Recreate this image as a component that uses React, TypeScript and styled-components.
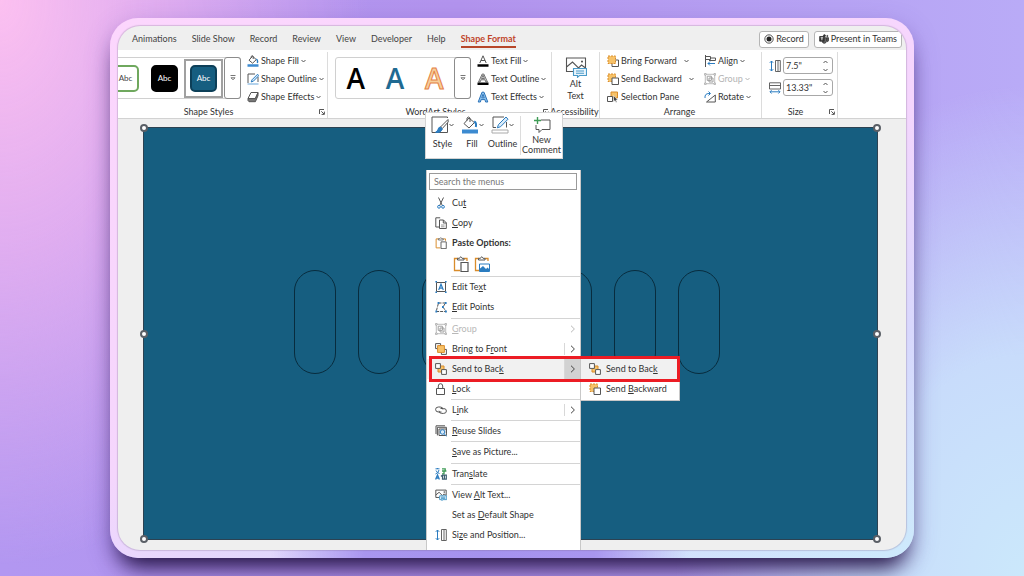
import React from "react";
import styled, { createGlobalStyle, css } from "styled-components";

const GlobalStyle = createGlobalStyle`
  *, *::before, *::after { box-sizing: border-box; }
  body {
    margin: 0;
    font-family: Lato, "Open Sans", "Noto Sans", sans-serif;
    font-size: 9px;
    line-height: 12px;
    color: #333;
  }
  button, input {
    font: inherit;
    color: inherit;
    margin: 0;
    padding: 0;
    border: 0;
    background: none;
  }
  svg { display: block; flex: none; }
`;

/* ---------- page and window ---------- */

const Page = styled.main`
  min-height: 100vh;
  padding: 18px 110px;
  overflow: hidden;
  background:
    radial-gradient(ellipse 36% 98% at 0% 0%, #fcc0f0 0%, rgba(238, 180, 240, 0.75) 45%, rgba(200, 160, 240, 0) 100%),
    radial-gradient(ellipse 34% 85% at 100% 100%, #cbe8fb 0%, #c8dcfb 45%, rgba(190, 175, 246, 0) 100%),
    linear-gradient(90deg, #b297f1 0%, #b394ee 45%, #b9abf7 100%);
`;

const Frame = styled.div`
  padding: 8px;
  border-radius: 28px;
  background:
    radial-gradient(ellipse 26% 60% at 46% 100%, #a592ee 0%, #a996ef 55%, rgba(176, 152, 240, 0) 100%),
    linear-gradient(155deg, #fcd6fd 0%, #f5d6fd 50%, #d8d8fd 75%, #cdeafc 100%);
  box-shadow: 0 18px 22px -10px #20103f, 0 8px 24px rgba(90, 60, 160, 0.35);
`;

const AppWindow = styled.section`
  position: relative;
  overflow: hidden;
  border-radius: 22px;
  background: #efefef;
  box-shadow: 0 0 1px 1px rgba(130, 110, 150, 0.3);
`;

/* ---------- tab bar ---------- */

const TabBar = styled.nav`
  display: flex;
  align-items: center;
  height: 24px;
  padding: 2px 4px 0 14px;
`;

const Tabs = styled.div`
  display: flex;
  flex: 1;
  gap: 15px;
`;

const Tab = styled.button<{ $active?: boolean }>`
  height: 17px;
  line-height: 15px;
  color: #444;
  border-bottom: 2px solid transparent;
  white-space: nowrap;
  ${(p) =>
    p.$active &&
    css`
      color: #c0442a;
      font-weight: 700;
      border-color: #b7472a;
    `}
`;

const BarButton = styled.button`
  display: flex;
  align-items: center;
  gap: 2px;
  height: 17px;
  margin-left: 5px;
  padding: 0 4px;
  background: #fff;
  border: 1px solid #b5b5b5;
  border-radius: 3px;
  white-space: nowrap;
`;

/* ---------- ribbon ---------- */

const Ribbon = styled.div`
  display: flex;
  height: 69px;
  padding-top: 2px;
  background: #fff;
  border-bottom: 1px solid #d2d2d2;
`;

const Group = styled.section<{ $width: number }>`
  display: flex;
  flex-direction: column;
  flex: 0 0 ${(p) => p.$width}px;
  min-width: 0;
  border-right: 1px solid #dcdcdc;
`;

const GroupBody = styled.div<{ $indent?: number }>`
  display: flex;
  flex: none;
  height: 54px;
  gap: 6px;
  padding-left: ${(p) => p.$indent ?? 0}px;
`;

const GroupFooter = styled.div<{ $gap?: number }>`
  display: flex;
  flex: none;
  align-items: center;
  justify-content: flex-end;
  gap: ${(p) => p.$gap ?? 0}px;
  height: 12px;
  padding-right: 2px;
`;

const GroupLabel = styled.span`
  display: flex;
  flex: 1;
  justify-content: center;
  min-width: 0;
  white-space: nowrap;
`;

const Gallery = styled.div<{ $width: number; $open?: boolean }>`
  display: flex;
  align-items: center;
  width: ${(p) => p.$width}px;
  height: 42px;
  margin-top: 5px;
  border: 1px solid #d0d0d0;
  border-radius: 3px;
  ${(p) =>
    p.$open &&
    css`
      border-left: 0;
      border-top-left-radius: 0;
      border-bottom-left-radius: 0;
    `}
`;

const StyleSlot = styled.button<{ $selected?: boolean }>`
  display: flex;
  align-items: center;
  justify-content: center;
  width: 39px;
  height: 39px;
  border: 2px solid ${(p) => (p.$selected ? "#a0a0a0" : "transparent")};

  &:first-child {
    margin-left: -12px;
  }
`;

const StyleTile = styled.span<{ $fill: string; $ink: string; $edge: string }>`
  flex: none;
  width: 27px;
  height: 27px;
  font-size: 8px;
  line-height: 22px;
  text-align: center;
  color: ${(p) => p.$ink};
  background: ${(p) => p.$fill};
  border: 2px solid ${(p) => p.$edge};
  border-radius: 5px;
`;

const ArtButton = styled.button`
  display: flex;
  flex: 1;
  align-items: center;
  justify-content: center;
`;

const GalleryMore = styled.button`
  display: flex;
  align-items: center;
  justify-content: center;
  width: 17px;
  height: 42px;
  margin: 0 -1px 0 auto;
  border: 1px solid #8c8c8c;
  border-radius: 3px;
`;

const Commands = styled.div<{ $width?: number }>`
  display: flex;
  flex-direction: column;
  width: ${(p) => (p.$width ? `${p.$width}px` : "auto")};
`;

const Command = styled.button<{ $disabled?: boolean; $spread?: boolean }>`
  display: flex;
  align-items: center;
  gap: ${(p) => (p.$spread ? 7 : 2)}px;
  height: 18px;
  white-space: nowrap;
  color: ${(p) => (p.$disabled ? "#b4b4b4" : "inherit")};
`;

const CommandText = styled.span`
  display: flex;
  align-items: center;
  gap: 2px;
`;

const TallCommand = styled.button`
  display: flex;
  flex-direction: column;
  align-items: center;
  flex: 1;
  padding-top: 4px;
`;

const SizeRow = styled.label`
  display: flex;
  align-items: center;
  gap: 2px;
  height: 17px;
`;

const SizeFields = styled.div`
  display: flex;
  flex-direction: column;
  gap: 5px;
  padding-top: 5px;
`;

const SizeBox = styled.span`
  display: flex;
  align-items: center;
  width: 50px;
  height: 17px;
  padding: 0 4px 0 2px;
  border: 1px solid #a8a8a8;
  border-radius: 3px;
`;

const SizeInput = styled.input`
  flex: 1;
  min-width: 0;
  outline: 0;
`;

const Spinner = styled.span`
  display: flex;
  flex-direction: column;
  gap: 4px;
`;

/* ---------- slide ---------- */

const Stage = styled.div`
  padding: 8px 28px 10px 25px;
`;

const Slide = styled.div`
  position: relative;
  display: flex;
  align-items: center;
  justify-content: center;
  gap: 22px;
  aspect-ratio: 16 / 9;
  padding: 0 7px 24px 0;
  background: #165e80;
  border: 1px solid #2c4252;
`;

const Capsule = styled.span`
  width: 42px;
  height: 104px;
  border: 1px solid #082c3e;
  border-radius: 21px;
`;

const Handle = styled.span<{ $x: number; $y: number }>`
  position: absolute;
  left: ${(p) => p.$x}%;
  top: ${(p) => p.$y}%;
  width: 8px;
  height: 8px;
  transform: translate(-50%, -50%);
  border: 2px solid #5a5f66;
  border-radius: 50%;
  background: #fff;
`;

/* ---------- floating toolbar and menus ---------- */

const MiniToolbar = styled.div`
  position: absolute;
  left: 307px;
  top: 86px;
  display: flex;
  width: 138px;
  height: 47px;
  padding: 3px 0;
  background: #fff;
  border: 1px solid #d4d4d4;
`;

const MiniButton = styled.button<{ $width: number; $divided?: boolean }>`
  display: flex;
  flex-direction: column;
  align-items: center;
  justify-content: space-between;
  flex: 0 0 ${(p) => p.$width}px;
  padding-bottom: ${(p) => (p.$divided ? 0 : 6)}px;
  line-height: 10px;
  border-left: ${(p) => (p.$divided ? "1px solid #dcdcdc" : "0")};
`;

const MiniIcon = styled.span`
  display: flex;
  align-items: center;
`;

const ContextMenu = styled.div`
  position: absolute;
  left: 308px;
  top: 144px;
  width: 155px;
  padding: 3px 0 20px;
  background: #fff;
  border: 1px solid #c8c8c8;
  border-top-width: 0;
`;

const SearchBox = styled.input`
  display: block;
  width: 148px;
  height: 17px;
  margin: 0 0 3px 2px;
  padding: 0 4px 1px;
  border: 1px solid #9a9a9a;
  background: #fff;

  &::placeholder {
    color: #777;
    opacity: 1;
  }
`;

const MenuRow = styled.button<{ $disabled?: boolean; $current?: boolean; $bold?: boolean }>`
  display: flex;
  align-items: center;
  width: 100%;
  height: 20px;
  padding-left: 8px;
  text-align: left;
  white-space: nowrap;
  color: ${(p) => (p.$disabled ? "#b8b8b8" : "#333")};
  background: ${(p) => (p.$current ? "#f1f1f1" : "transparent")};
  font-weight: ${(p) => (p.$bold ? 700 : 400)};
`;

const MenuIcon = styled.span`
  width: 17px;
`;

const MenuText = styled.span`
  flex: 1;
`;

const MenuArrow = styled.span<{ $split?: boolean; $current?: boolean }>`
  display: flex;
  align-items: center;
  justify-content: center;
  width: 16px;
  height: ${(p) => (p.$current ? 20 : 12)}px;
  border-left: 1px solid ${(p) => (p.$split ? "#d8d8d8" : "transparent")};
  background: ${(p) => (p.$current ? "#d2d2d2" : "transparent")};
`;

const MenuRule = styled.hr<{ $roomy?: boolean }>`
  height: 1px;
  margin: ${(p) => (p.$roomy ? 1 : 0)}px 0 0 24px;
  border: 0;
  background: #d4d4d4;
`;

const PasteRow = styled.div`
  display: flex;
  align-items: flex-start;
  gap: 5px;
  height: 23px;
  padding: 3px 0 0 26px;
`;

const SubMenu = styled.div`
  position: absolute;
  left: 462px;
  top: 331px;
  width: 100px;
  padding: 1px 0;
  background: #fff;
  border: 1px solid #c8c8c8;
`;

const Highlight = styled.div`
  position: absolute;
  left: 311px;
  top: 330px;
  width: 251px;
  height: 26px;
  border: 3px solid #ec1c24;
  pointer-events: none;
`;

/* ---------- icons ---------- */

const INK = "#555";
const BLUE = "#2b7cc0";
const AMBER = "#f7c268";
const RUST = "#d98c2b";

type IconProps = { children: React.ReactNode; w?: number; h?: number; box?: string };
const Icon = ({ children, w = 12, h = 12, box = "0 0 12 12" }: IconProps) => (
  <svg width={w} height={h} viewBox={box} fill="none" stroke={INK} strokeWidth="1" aria-hidden="true">
    {children}
  </svg>
);

const Down = ({ color = "#555" }: { color?: string }) => (
  <svg width="5" height="4" viewBox="0 0 5 4" fill="none" stroke={color} aria-hidden="true">
    <path d="M0.5 1l2 2 2-2" />
  </svg>
);

const Up = () => (
  <svg width="5" height="4" viewBox="0 0 5 4" fill="none" stroke="#555" aria-hidden="true">
    <path d="M0.5 3l2-2 2 2" />
  </svg>
);

const Right = ({ color = "#444" }: { color?: string }) => (
  <svg width="6" height="8" viewBox="0 0 6 8" fill="none" stroke={color} aria-hidden="true">
    <path d="M1 0.7l3.4 3.3L1 7.3" />
  </svg>
);

const MoreMark = () => (
  <svg width="6" height="6" viewBox="0 0 6 6" fill="none" stroke="#666" aria-hidden="true">
    <path d="M0.5 0.5h5M1 2.8h4L3 4.8z" strokeWidth="0.9" />
  </svg>
);

const Launcher = () => (
  <svg width="6" height="6" viewBox="0 0 6 6" fill="none" stroke="#555" aria-hidden="true">
    <path d="M0.5 5V0.5H5M2.3 2.3L5 5M5.4 2.6v2.8H2.6" />
  </svg>
);

const FillIcon = () => (
  <Icon>
    <path d="M5.5 1.2L2 5.2l3.6 3 3.7-3.6zM4.2 3V1.4q1-1.4 2 0V4" fill="#fff" />
    <path d="M9.3 4q1.9 1.2 1 4" stroke={BLUE} strokeWidth="1.4" />
    <path d="M0.5 10.5h11" stroke="#3c8ad0" strokeWidth="2.4" />
  </Icon>
);
const OutlineIcon = () => (
  <Icon>
    <path d="M8 1H1v9M11 4v5" />
    <path d="M10.6 1.2L5 6.8 4.2 9l2.2-.8 5.2-5.4z" stroke={BLUE} fill="#d9ebf9" />
    <path d="M0.5 11h11" stroke="#9ac3e6" strokeWidth="1.6" />
  </Icon>
);
const EffectsIcon = () => (
  <Icon>
    <path d="M4 1.5h7L8.4 7.5H1z" fill="#fff" />
    <path d="M1 7.5v2l1 1.2h6.4L11 4.7V1.8L8.4 7.5z" fill="#777" />
  </Icon>
);

const TextFillIcon = () => (
  <Icon>
    <path d="M2.8 8L6 0.8 9.2 8M4 5.5h4" />
    <path d="M0.5 10.5h11" stroke="#000" strokeWidth="2.6" />
  </Icon>
);
const TextOutlineIcon = () => (
  <Icon>
    <path d="M1.5 9L5.2 1h1.6L10.5 9H8.9L8 6.8H4L3.1 9zM4.6 5.5h2.8L6 2.2z" strokeWidth="0.8" fill="#ddd" />
    <path d="M0.5 10.7h11" stroke="#000" strokeWidth="2.4" />
  </Icon>
);
const TextEffectsIcon = () => (
  <Icon>
    <path d="M1.2 11L5 1.2h2L10.8 11H8.6L7.9 8.6H4.1L3.4 11zM4.8 6.8h2.4L6 3.4z" stroke="#2a72b8" fill="#8fc3ee" />
  </Icon>
);

const WordArtMark = styled.span<{ $color: string; $outline?: string }>`
  font-family: "Open Sans", sans-serif;
  font-size: 28px;
  line-height: 36px;
  font-weight: 600;
  color: ${(p) => p.$color};
  -webkit-text-stroke: ${(p) => (p.$outline ? `1px ${p.$outline}` : "0")};
`;

const ForwardIcon = () => (
  <Icon>
    <path d="M5 11.5h6.5V5H5z" fill="#fff" />
    <path d="M1 1h7.5v7.5H1z" fill={AMBER} stroke={RUST} strokeDasharray="2 1" />
  </Icon>
);
const BackwardIcon = () => (
  <Icon>
    <path d="M1 1h7.5v7.5H1z" fill={AMBER} stroke={RUST} strokeDasharray="2 1" />
    <path d="M5 11.5h6.5V5H5z" fill="#fff" />
  </Icon>
);
const PaneIcon = () => (
  <Icon>
    <path d="M4 1h6.5v6H4z" fill={AMBER} stroke={RUST} />
    <path d="M0.5 5.5h5v5h-5z" fill="#fff" />
    <path d="M6.5 4.5v6.3l1.5-1.3 1 2 1-.5-1-1.9h1.8z" fill="#444" stroke="#fff" strokeWidth="0.5" />
  </Icon>
);
const AlignIcon = () => (
  <Icon>
    <path d="M1.5 0v12M1.5 1.5h5v3h-5M6.5 3h5v2.5H5" />
    <path d="M11 8.5H4M6 6.5l-2 2 2 2" stroke={BLUE} />
  </Icon>
);
const GroupIcon = ({ color = "#a0a0a0" }: { color?: string }) => (
  <Icon>
    <g stroke={color}>
      <path d="M2 1.3h8M2 10.7h8M1.3 2v8M10.7 2v8" strokeWidth="0.7" />
      <path d="M3.2 3.2h4.2v4.2H3.2zM5 5h4v4H5z" />
      <path d="M0.5 0.5h1.6v1.6H.5zM10 .5h1.6v1.6H10zM.5 10h1.6v1.6H.5zM10 10h1.6v1.6H10z" fill="#fff" strokeWidth="0.7" />
    </g>
  </Icon>
);
const RotateIcon = () => (
  <Icon>
    <path d="M11.3 4v7H2.5z" fill="#fff" />
    <path d="M1 7q-.5-4.5 4-4.5h1M4.5.5l2 2-2 2" stroke={BLUE} />
  </Icon>
);
const HeightIcon = () => (
  <Icon>
    <path d="M6.5 .5h4.8v11H6.5zM9 .5v11" strokeWidth="0.9" />
    <path d="M2.5 1v10M.8 2.8L2.5 1l1.7 1.8M.8 9.2L2.5 11l1.7-1.8" stroke={BLUE} />
  </Icon>
);
const WidthIcon = () => (
  <Icon>
    <path d="M.5 7V.8h11V7zM.5 3.5h11" strokeWidth="0.9" />
    <path d="M1 9.8h10M2.6 8.2L1 9.8l1.6 1.7M9.4 8.2L11 9.8l-1.6 1.7" stroke={BLUE} />
  </Icon>
);
const AltTextIcon = ({ size = 22 }: { size?: number }) => (
  <Icon w={size} h={size} box="0 0 22 22">
    <g strokeWidth={size > 12 ? 1.1 : 1.8}>
      <path d="M9 15.5H1.5V2h19v10M1.5 11l6-5 6 6 3-3 4 3" />
      <path d="M17 4.6v2M16 5.6h2" />
      <path d="M8.5 12.5h13v7h-7l-2 1.8v-1.8h-4z" fill="#eaf5fc" stroke="#4a9ac8" />
      <path d="M11 15h8M11 17.2h8" stroke="#4a9ac8" />
    </g>
  </Icon>
);
const RecordIcon = () => (
  <Icon w={10} h={10}>
    <circle cx="6" cy="6" r="5" stroke="#333" />
    <circle cx="6" cy="6" r="3" fill="#222" stroke="none" />
  </Icon>
);
const TeamsIcon = () => (
  <Icon w={10} h={10}>
    <g stroke="#333" fill="#333">
      <circle cx="6.5" cy="2" r="1.2" />
      <circle cx="10" cy="2.4" r="0.7" />
      <path d="M5 4.5h4v4q-.4 2.6-2.5 2.6T4 9.5zM9.5 4.5h2v3q-.2 1.5-1.5 1.7z" fill="#666" />
      <path d="M.8 3h5.4v5.6H.8z" />
      <path d="M2 4.5h3M3.5 4.5v3" stroke="#fff" />
    </g>
  </Icon>
);

const StyleBigIcon = () => (
  <Icon w={18} h={18} box="0 0 18 18">
    <path d="M16.5 7v9.5H1V1h15.5v1" />
    <path d="M17 3.5L9.5 11l1.8 1.5L17.2 6z" fill="#fff" />
    <path d="M9.4 11q-2 .2-2.4 2.4-.5 2-2.4 2.8 5 1.2 6.8-3.2z" fill={BLUE} stroke={BLUE} />
  </Icon>
);
const FillBigIcon = () => (
  <Icon w={18} h={18} box="0 0 18 18">
    <path d="M8 2L3 7.6l5 4.4 5.4-5.4zM6 4.6V2q1.5-2 3 0v4" fill="#fff" />
    <path d="M13.2 5.5q2.6 1.4 1.6 5.5" stroke={BLUE} strokeWidth="2" />
    <path d="M1 15.5h16" stroke="#3c8ad0" strokeWidth="4" />
  </Icon>
);
const OutlineBigIcon = () => (
  <Icon w={18} h={18} box="0 0 18 18">
    <path d="M13 1H2v10.5h3M15.5 6v5.5" />
    <path d="M15 1L7.5 8.5l-1.2 3.3 3.3-1.1L17 3.2z" fill="#d9ebf9" stroke={BLUE} />
    <path d="M1 14h16v3H1z" stroke="#aaa" fill="#fff" />
  </Icon>
);
const CommentIcon = () => (
  <Icon w={18} h={18} box="0 0 18 18">
    <path d="M8 4h9v9.5H9l-3 3v-3H3V9" fill="#fff" />
    <path d="M4.5 1v7M1 4.5h7" stroke="#3f9c56" strokeWidth="1.4" />
  </Icon>
);

const CutIcon = () => (
  <Icon>
    <path d="M3.5 .5l3.8 8M8.5 .5l-3.8 8" />
    <circle cx="4" cy="9.8" r="1.4" stroke={BLUE} />
    <circle cx="8" cy="9.8" r="1.4" stroke={BLUE} />
  </Icon>
);
const CopyIcon = () => (
  <Icon>
    <path d="M4 10H.8V.8h4.4M4.5 3h4l2.8 2.8v5.7H4.5zM8.3 3v3h3" />
    <path d="M6 8h3.6M6 9.8h3.6" strokeWidth="0.6" />
  </Icon>
);
const PasteIcon = ({ size = 12, picture = false }: { size?: number; picture?: boolean }) => (
  <Icon w={size} h={size} box="0 0 16 16">
    <path d="M5 2.5H1.5v12H7M11 2.5h3V5" stroke={RUST} strokeWidth="1.3" />
    <path d="M4.5 4V2.3h2q1.2-3 2.5 0h2V4z" fill="#fff" />
    {picture ? (
      <>
        <path d="M5.5 8h10v7.5h-10z" fill="#fff" stroke={BLUE} />
        <path d="M6 15v-2.5l3-2.5 3 3 1.5-1.5 2 2V15z" fill={BLUE} stroke="none" />
      </>
    ) : (
      <path d="M8 6.5h7v9H8z" fill="#fff" strokeWidth="1.2" />
    )}
  </Icon>
);
const EditTextIcon = () => (
  <Icon>
    <path d="M1.5 1.5h9v9h-9z" stroke={INK} />
    <path d="M3.7 9L6 3.2 8.3 9M4.5 7.2h3" stroke={BLUE} strokeWidth="1.2" />
    <path d="M.4.8h1.6M10 .8h1.6M.4 11.2H2M10 11.2h1.6" stroke={BLUE} strokeWidth="1.5" />
  </Icon>
);
const EditPointsIcon = () => (
  <Icon>
    <path d="M3.5 2h7L8 6l3 4.5H1.2z" strokeDasharray="3 1" />
    <path d="M2.6 2h1.8M9.8 2h1.8M.4 10.5h1.8M10 10.5h1.8M7 6h1.8" stroke={BLUE} strokeWidth="1.8" />
  </Icon>
);
const BringFrontIcon = () => (
  <Icon>
    <path d="M.6.6h5v5h-5zM6.4 6.4h5v5h-5z" fill="#fff" />
    <path d="M2.6 2.6h6.8v6.8H2.6z" fill={AMBER} stroke={RUST} />
  </Icon>
);
const SendBackIcon = () => (
  <Icon>
    <path d="M3 3h6v6H3z" fill={AMBER} stroke={RUST} />
    <path d="M.6.6h4.8v4.8H.6zM6.6 6.6h4.8v4.8H6.6z" fill="#fff" />
  </Icon>
);
const LockIcon = () => (
  <Icon>
    <path d="M1.5 5.5h8v6h-8zM3.3 5.5V3q0-2.3 2.2-2.3T7.7 3v2.5" />
  </Icon>
);
const LinkIcon = () => (
  <Icon>
    <path d="M6.5 8H3.4Q.6 8 .6 5.4 .6 3 3.4 3h1.8Q8 3 8 5.6" />
    <path d="M5.5 4.5h3.1q2.8 0 2.8 2.5 0 2.4-2.8 2.4H6.8Q4 9.4 4 6.8" />
  </Icon>
);
const ReuseIcon = () => (
  <Icon>
    <path d="M1 9V.8h9M2.4 10.4V2.3h9V8" />
    <path d="M4 10.5V4h7.4v6.5z" />
    <circle cx="7.5" cy="7" r="2.3" stroke={BLUE} fill="#d9ebf9" />
    <path d="M9.2 8.8l2.4 2.6" stroke={BLUE} />
  </Icon>
);
const TranslateIcon = () => (
  <Icon>
    <path d="M.5 .8h4M2.5 0v1M1 2.5q1 2.5 3.5 3M4 2q-.5 3-3.5 4" stroke={BLUE} />
    <path d="M.6 11.5l1.9-4.5 1.9 4.5M1.4 10h2.2" stroke={BLUE} strokeWidth="1.3" />
    <path d="M7 .8h3.2v2M7 3h4.4M9 3v2.8H7" stroke="#3f9c56" strokeWidth="1.3" />
    <path d="M6 7.5l1.5 1.4M7.5 7.2h3.8v4H7.5zM9.4 7v4.5" stroke="#3d5f70" strokeWidth="1.2" />
  </Icon>
);

/* ---------- pieces ---------- */

/* An ampersand in a label marks its access key, which is underlined. */
const KeyLabel = ({ text }: { text: string }) => {
  const at = text.indexOf("&");
  if (at < 0) return <>{text}</>;
  return (
    <>
      {text.slice(0, at)}
      <u>{text[at + 1]}</u>
      {text.slice(at + 2)}
    </>
  );
};

type ItemProps = {
  label: string;
  icon?: React.ReactNode;
  arrow?: "plain" | "split";
  disabled?: boolean;
  current?: boolean;
  bold?: boolean;
};
const MenuItem = ({ label, icon, arrow, disabled, current, bold }: ItemProps) => (
  <MenuRow type="button" role="menuitem" $disabled={disabled} $current={current} $bold={bold}>
    <MenuIcon>{icon}</MenuIcon>
    <MenuText>
      <KeyLabel text={label} />
    </MenuText>
    {arrow && (
      <MenuArrow $split={arrow === "split"} $current={current}>
        <Right color={disabled ? "#b8b8b8" : "#444"} />
      </MenuArrow>
    )}
  </MenuRow>
);

const DropCommand = ({ icon, label, disabled }: { icon: React.ReactNode; label: string; disabled?: boolean }) => (
  <Command type="button" $disabled={disabled}>
    {icon}
    <span>{label}</span>
    <Down color={disabled ? "#b4b4b4" : "#555"} />
  </Command>
);

const SizeField = ({ id, icon, label, value }: { id: string; icon: React.ReactNode; label: string; value: string }) => (
  <SizeRow htmlFor={id}>
    {icon}
    <SizeBox>
      <SizeInput id={id} aria-label={label} defaultValue={value} />
      <Spinner>
        <Up />
        <Down />
      </Spinner>
    </SizeBox>
  </SizeRow>
);

const TABS = ["Animations", "Slide Show", "Record", "Review", "View", "Developer", "Help", "Shape Format"];
const HANDLES = [
  [0, 0], [100, 0], [0, 50], [100, 50], [0, 100], [100, 100],
];

export default function App() {
  return (
    <Page>
      <GlobalStyle />
      <Frame>
        <AppWindow>
          <TabBar>
            <Tabs>
              {TABS.map((name) => (
                <Tab key={name} type="button" $active={name === "Shape Format"}>
                  {name}
                </Tab>
              ))}
            </Tabs>
            <BarButton type="button"><RecordIcon />Record</BarButton>
            <BarButton type="button"><TeamsIcon />Present in Teams</BarButton>
          </TabBar>

          <Ribbon>
            <Group $width={210}>
              <GroupBody>
                <Gallery $width={123} $open>
                  <StyleSlot type="button">
                    <StyleTile $fill="#fff" $ink="#444" $edge="#6fa85e">Abc</StyleTile>
                  </StyleSlot>
                  <StyleSlot type="button">
                    <StyleTile $fill="#000" $ink="#fff" $edge="#000">Abc</StyleTile>
                  </StyleSlot>
                  <StyleSlot type="button" $selected>
                    <StyleTile $fill="#165e80" $ink="#fff" $edge="#0d3f58">Abc</StyleTile>
                  </StyleSlot>
                  <GalleryMore type="button" aria-label="More shape styles"><MoreMark /></GalleryMore>
                </Gallery>
                <Commands>
                  <DropCommand icon={<FillIcon />} label="Shape Fill" />
                  <DropCommand icon={<OutlineIcon />} label="Shape Outline" />
                  <DropCommand icon={<EffectsIcon />} label="Shape Effects" />
                </Commands>
              </GroupBody>
              <GroupFooter $gap={20}><GroupLabel>Shape Styles</GroupLabel><Launcher /></GroupFooter>
            </Group>

            <Group $width={224}>
              <GroupBody $indent={7}>
                <Gallery $width={136}>
                  <ArtButton type="button"><WordArtMark $color="#000">A</WordArtMark></ArtButton>
                  <ArtButton type="button"><WordArtMark $color="#1f6a92">A</WordArtMark></ArtButton>
                  <ArtButton type="button"><WordArtMark $color="#f6cf9c" $outline="#e58146">A</WordArtMark></ArtButton>
                  <GalleryMore type="button" aria-label="More WordArt styles"><MoreMark /></GalleryMore>
                </Gallery>
                <Commands>
                  <DropCommand icon={<TextFillIcon />} label="Text Fill" />
                  <DropCommand icon={<TextOutlineIcon />} label="Text Outline" />
                  <DropCommand icon={<TextEffectsIcon />} label="Text Effects" />
                </Commands>
              </GroupBody>
              <GroupFooter><GroupLabel>WordArt Styles</GroupLabel><Launcher /></GroupFooter>
            </Group>

            <Group $width={48}>
              <GroupBody>
                <TallCommand type="button">
                  <AltTextIcon />
                  <span>Alt</span>
                  <span>Text</span>
                </TallCommand>
              </GroupBody>
              <GroupFooter><GroupLabel>Accessibility</GroupLabel></GroupFooter>
            </Group>

            <Group $width={162}>
              <GroupBody $indent={7}>
                <Commands $width={91}>
                  <Command type="button" $spread>
                    <CommandText><ForwardIcon />Bring Forward</CommandText><Down />
                  </Command>
                  <Command type="button" $spread>
                    <CommandText><BackwardIcon />Send Backward</CommandText><Down />
                  </Command>
                  <Command type="button">
                    <PaneIcon />Selection Pane
                  </Command>
                </Commands>
                <Commands>
                  <DropCommand icon={<AlignIcon />} label="Align" />
                  <DropCommand icon={<GroupIcon />} label="Group" disabled />
                  <DropCommand icon={<RotateIcon />} label="Rotate" />
                </Commands>
              </GroupBody>
              <GroupFooter><GroupLabel>Arrange</GroupLabel></GroupFooter>
            </Group>

            <Group $width={76}>
              <GroupBody $indent={7}>
                <SizeFields>
                  <SizeField id="shape-height" icon={<HeightIcon />} label="Shape height" value={'7.5"'} />
                  <SizeField id="shape-width" icon={<WidthIcon />} label="Shape width" value={'13.33"'} />
                </SizeFields>
              </GroupBody>
              <GroupFooter><GroupLabel>Size</GroupLabel><Launcher /></GroupFooter>
            </Group>
          </Ribbon>

          <Stage>
            <Slide>
              {Array.from({ length: 7 }, (_, i) => <Capsule key={i} />)}
              {HANDLES.map(([x, y]) => <Handle key={`${x}-${y}`} $x={x} $y={y} />)}
            </Slide>
          </Stage>

          <MiniToolbar role="toolbar" aria-label="Shape formatting">
            <MiniButton type="button" $width={33}>
              <MiniIcon><StyleBigIcon /><Down /></MiniIcon>Style
            </MiniButton>
            <MiniButton type="button" $width={26}>
              <MiniIcon><FillBigIcon /><Down /></MiniIcon>Fill
            </MiniButton>
            <MiniButton type="button" $width={35}>
              <MiniIcon><OutlineBigIcon /><Down /></MiniIcon>Outline
            </MiniButton>
            <MiniButton type="button" $width={42} $divided>
              <MiniIcon><CommentIcon /></MiniIcon>
              <span>New<br />Comment</span>
            </MiniButton>
          </MiniToolbar>

          <ContextMenu role="menu">
            <SearchBox type="text" aria-label="Search the menus" placeholder="Search the menus" />
            <MenuItem icon={<CutIcon />} label="Cu&t" />
            <MenuItem icon={<CopyIcon />} label="&Copy" />
            <MenuItem icon={<PasteIcon />} label="Paste Options:" bold />
            <PasteRow>
              <button type="button" aria-label="Use destination theme"><PasteIcon size={16} /></button>
              <button type="button" aria-label="Paste as picture"><PasteIcon size={16} picture /></button>
            </PasteRow>
            <MenuRule />
            <MenuItem icon={<EditTextIcon />} label="Edit Te&xt" />
            <MenuItem icon={<EditPointsIcon />} label="&Edit Points" />
            <MenuRule $roomy />
            <MenuItem icon={<GroupIcon />} label="&Group" arrow="plain" disabled />
            <MenuItem icon={<BringFrontIcon />} label="Bring to F&ront" arrow="split" />
            <MenuItem icon={<SendBackIcon />} label="Send to Bac&k" arrow="split" current />
            <MenuItem icon={<LockIcon />} label="&Lock" />
            <MenuRule />
            <MenuItem icon={<LinkIcon />} label="L&ink" arrow="split" />
            <MenuRule />
            <MenuItem icon={<ReuseIcon />} label="&Reuse Slides" />
            <MenuRule />
            <MenuItem label="&Save as Picture..." />
            <MenuRule $roomy />
            <MenuItem icon={<TranslateIcon />} label="Tran&slate" />
            <MenuRule />
            <MenuItem icon={<AltTextIcon size={12} />} label="View &Alt Text..." />
            <MenuItem label="Set as &Default Shape" />
            <MenuItem icon={<HeightIcon />} label="Si&ze and Position..." />
          </ContextMenu>

          <SubMenu role="menu">
            <MenuItem icon={<SendBackIcon />} label="Send to Bac&k" current />
            <MenuItem icon={<BackwardIcon />} label="Send &Backward" />
          </SubMenu>

          <Highlight />
        </AppWindow>
      </Frame>
    </Page>
  );
}
